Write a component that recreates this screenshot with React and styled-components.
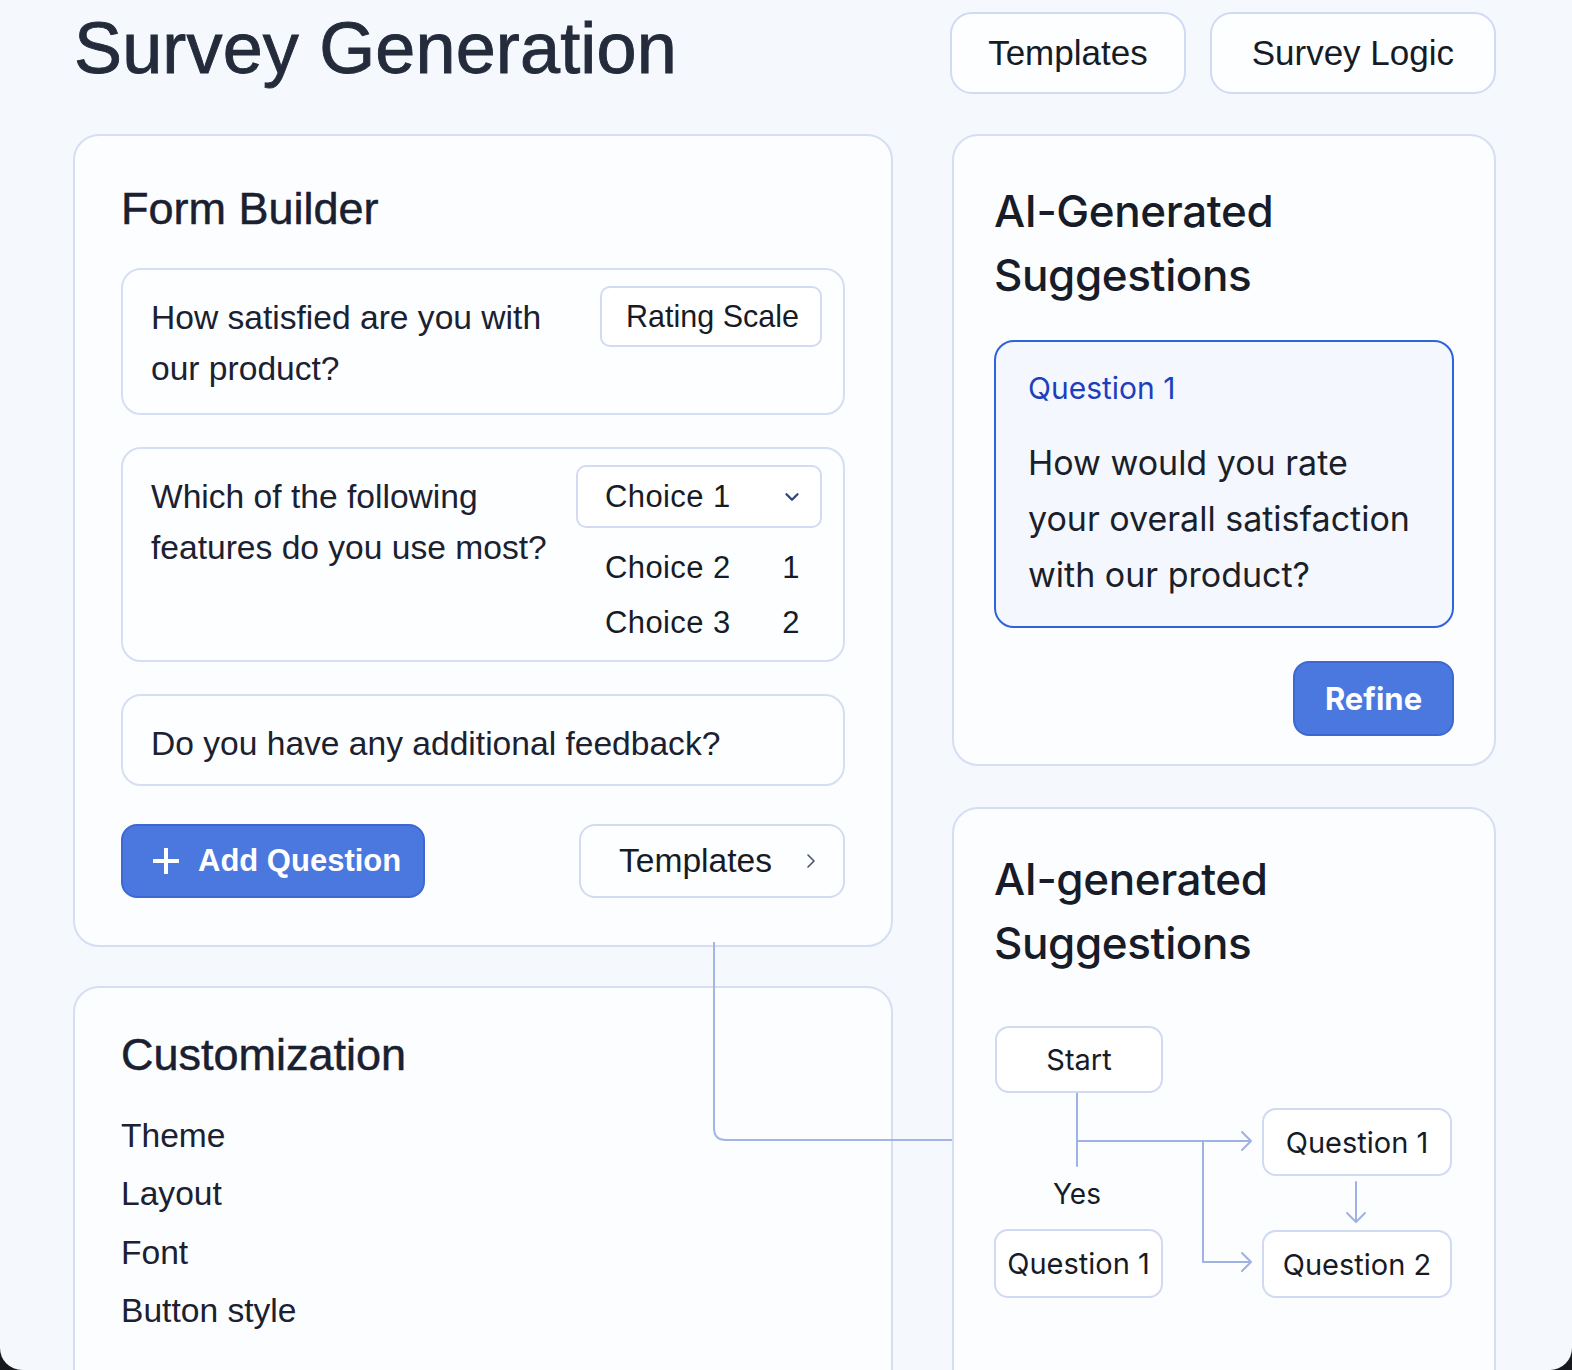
import React from "react";
import styled, { createGlobalStyle } from "styled-components";
import { ChevronDown, ChevronRight } from "lucide-react";

const GlobalStyle = createGlobalStyle`
  html, body {
    margin: 0;
    background: #17191e;
  }
  body {
    font-family: "Liberation Sans", Arial, sans-serif;
    color: #1b2130;
  }
  * {
    box-sizing: border-box;
  }
`;

const Page = styled.div`
  position: relative;
  width: 1572px;
  height: 1370px;
  overflow: hidden;
  background: #f5f8fd;
  border-radius: 0 0 22px 22px;
  padding: 0 76px 0 73px;
`;

const Header = styled.header`
  height: 134px;
  display: flex;
  align-items: flex-start;
  justify-content: space-between;
`;

const Title = styled.h1`
  margin: 5px 0 0 1px;
  font-size: 72px;
  line-height: 86px;
  font-weight: 400;
  color: #242b3b;
  -webkit-text-stroke: 0.9px #242b3b;
  letter-spacing: 0.15px;
`;

const HeaderActions = styled.div`
  display: flex;
  gap: 24px;
  margin-top: 12px;
`;

const OutlineButton = styled.button`
  height: 82px;
  padding: 0 ${(p) => p.$px}px;
  border: 2px solid #d1daf3;
  border-radius: 22px;
  background: #fdfeff;
  font-family: "Liberation Sans", Arial, sans-serif;
  font-size: 35px;
  color: #161b26;
  cursor: pointer;
`;

const Columns = styled.div`
  display: grid;
  grid-template-columns: 820px 544px;
  column-gap: 59px;
  align-items: start;
`;

const Column = styled.div`
  display: flex;
  flex-direction: column;
  gap: ${(p) => p.$gap}px;
`;

const Card = styled.section`
  background: #fcfdff;
  border: 2px solid #d6def4;
  border-radius: 26px;
  padding: ${(p) => p.$pad};
  min-height: ${(p) => p.$minH || "auto"};
`;

const CardTitle = styled.h2`
  margin: 0;
  font-size: 45px;
  line-height: 54px;
  font-weight: 400;
  color: #1a2030;
  -webkit-text-stroke: 0.5px #1a2030;
`;

const AiTitle = styled.h2`
  margin: 0;
  font-family: Inter, "Liberation Sans", sans-serif;
  font-size: 44px;
  line-height: 64px;
  font-weight: 500;
  letter-spacing: -0.4px;
  color: #171c28;
`;

const QuestionList = styled.div`
  display: flex;
  flex-direction: column;
  gap: 32px;
  margin-top: 32px;
`;

const QuestionCard = styled.div`
  display: flex;
  align-items: flex-start;
  justify-content: space-between;
  gap: 20px;
  background: #fdfeff;
  border: 2px solid #d6def4;
  border-radius: 20px;
  padding: 16px 21px ${(p) => p.$pb}px 28px;
`;

const QuestionText = styled.p`
  margin: 0;
  padding-top: 7px;
  font-size: 33.6px;
  line-height: 50.5px;
  color: #1b2130;
  flex: 1;
`;

const Chip = styled.div`
  height: 61px;
  display: flex;
  align-items: center;
  padding: 0 21px 0 24px;
  border: 2px solid #d3dbf2;
  border-radius: 10px;
  background: #ffffff;
  font-size: 30.5px;
  color: #161b26;
  white-space: nowrap;
`;

const ChoiceColumn = styled.div`
  width: 246px;
  display: flex;
  flex-direction: column;
`;

const Select = styled.div`
  height: 63px;
  display: flex;
  align-items: center;
  justify-content: space-between;
  padding: 0 17px 0 27px;
  border: 2px solid #d3dbf2;
  border-radius: 10px;
  background: #ffffff;
  font-size: 31px;
  letter-spacing: 0.4px;
  color: #161b26;
  margin-bottom: 12px;

  svg {
    color: #34477a;
  }
`;

const ChoiceRow = styled.div`
  display: flex;
  justify-content: space-between;
  padding: 0 22px 0 29px;
  font-size: 31px;
  line-height: 55px;
  letter-spacing: 0.4px;
  color: #161b26;
`;

const ActionRow = styled.div`
  display: flex;
  justify-content: space-between;
  margin-top: 38px;
`;

const PrimaryButton = styled.button`
  height: ${(p) => p.$h}px;
  width: ${(p) => p.$w}px;
  display: flex;
  align-items: center;
  justify-content: ${(p) => (p.$center ? "center" : "flex-start")};
  gap: 19px;
  padding: 0 0 0 ${(p) => (p.$center ? 0 : 30)}px;
  border: 2px solid #3d68d3;
  border-radius: 16px;
  background: #4a78df;
  color: #ffffff;
  font-family: ${(p) => p.$font};
  font-size: 31px;
  font-weight: 700;
  cursor: pointer;
`;

const TemplatesButton = styled.button`
  width: 266px;
  height: 74px;
  display: flex;
  align-items: center;
  justify-content: space-between;
  padding: 0 20px 0 38px;
  border: 2px solid #d3dbf2;
  border-radius: 16px;
  background: #fdfeff;
  font-family: "Liberation Sans", Arial, sans-serif;
  font-size: 33.6px;
  color: #161b26;
  cursor: pointer;

  svg {
    color: #4a5468;
  }
`;

const OptionList = styled.ul`
  list-style: none;
  margin: 25px 0 0;
  padding: 0;
`;

const OptionItem = styled.li`
  font-size: 33.6px;
  line-height: 58.5px;
  color: #1b2130;
`;

const SuggestionBox = styled.div`
  margin-top: 33px;
  border: 2px solid #2f63da;
  border-radius: 20px;
  background: #f4f7fd;
  padding: 26px 30px 23px 32px;
  font-family: Inter, "Liberation Sans", sans-serif;
`;

const SuggestionLabel = styled.div`
  font-size: 30px;
  line-height: 40px;
  color: #1d3fbd;
`;

const SuggestionText = styled.p`
  margin: 27px 0 0;
  font-size: 34px;
  line-height: 56px;
  color: #1a1f2b;
`;

const RefineRow = styled.div`
  display: flex;
  justify-content: flex-end;
  margin-top: 33px;
`;

const Diagram = styled.div`
  position: relative;
  height: 360px;
  font-family: Inter, "Liberation Sans", sans-serif;
`;

const Node = styled.div`
  position: absolute;
  display: flex;
  align-items: center;
  justify-content: center;
  background: #ffffff;
  border: 2px solid #d1daf3;
  border-radius: 14px;
  font-size: 29px;
  color: #161b26;
`;

const EdgeLabel = styled.span`
  position: absolute;
  transform: translate(-50%, -50%);
  font-size: 28px;
  color: #161b26;
`;

const Lines = styled.svg`
  position: absolute;
  inset: 0;
  overflow: visible;
  pointer-events: none;
`;

const Connector = styled.svg`
  position: absolute;
  left: 0;
  top: 0;
  width: 1572px;
  height: 1370px;
  pointer-events: none;
  z-index: 2;
`;

const PlusIcon = () => (
  <svg width="26" height="26" viewBox="0 0 26 26">
    <path d="M13 1v24M1 13h24" stroke="#fff" strokeWidth="4" strokeLinecap="round" />
  </svg>
);

const nodes = [
  { label: "Start", x: 1, y: 51, w: 168, h: 67 },
  { label: "Question 1", x: 268, y: 133, w: 190, h: 68 },
  { label: "Question 2", x: 268, y: 255, w: 190, h: 68 },
  { label: "Question 1", x: 0, y: 254, w: 169, h: 69 },
];

const customOptions = ["Theme", "Layout", "Font", "Button style"];

export default function App() {
  return (
    <Page>
      <GlobalStyle />
      <Header>
        <Title>Survey Generation</Title>
        <HeaderActions>
          <OutlineButton $px={36}>Templates</OutlineButton>
          <OutlineButton $px={40}>Survey Logic</OutlineButton>
        </HeaderActions>
      </Header>

      <Columns>
        <Column $gap={39}>
          <Card $pad="46px 46px 47px 46px">
            <CardTitle>Form Builder</CardTitle>
            <QuestionList>
              <QuestionCard $pb={19}>
                <QuestionText>How satisfied are you with our product?</QuestionText>
                <Chip>Rating Scale</Chip>
              </QuestionCard>
              <QuestionCard $pb={10}>
                <QuestionText>Which of the following features do you use most?</QuestionText>
                <ChoiceColumn>
                  <Select>
                    Choice 1
                    <ChevronDown size={22} strokeWidth={2.6} />
                  </Select>
                  <ChoiceRow>
                    <span>Choice 2</span>
                    <span>1</span>
                  </ChoiceRow>
                  <ChoiceRow>
                    <span>Choice 3</span>
                    <span>2</span>
                  </ChoiceRow>
                </ChoiceColumn>
              </QuestionCard>
              <QuestionCard $pb={14}>
                <QuestionText>Do you have any additional feedback?</QuestionText>
              </QuestionCard>
            </QuestionList>
            <ActionRow>
              <PrimaryButton $w={304} $h={74} $font='"Liberation Sans", Arial, sans-serif'>
                <PlusIcon />
                Add Question
              </PrimaryButton>
              <TemplatesButton>
                Templates
                <ChevronRight size={24} strokeWidth={1.6} />
              </TemplatesButton>
            </ActionRow>
          </Card>

          <Card $pad="40px 46px 40px 46px" $minH="520px">
            <CardTitle>Customization</CardTitle>
            <OptionList>
              {customOptions.map((o) => (
                <OptionItem key={o}>{o}</OptionItem>
              ))}
            </OptionList>
          </Card>
        </Column>

        <Column $gap={41}>
          <Card $pad="43px 40px 28px 40px">
            <AiTitle>
              AI-Generated
              <br />
              Suggestions
            </AiTitle>
            <SuggestionBox>
              <SuggestionLabel>Question 1</SuggestionLabel>
              <SuggestionText>
                How would you rate
                <br />
                your overall satisfaction
                <br />
                with our product?
              </SuggestionText>
            </SuggestionBox>
            <RefineRow>
              <PrimaryButton $w={161} $h={75} $center $font='Inter, "Liberation Sans", sans-serif'>
                Refine
              </PrimaryButton>
            </RefineRow>
          </Card>

          <Card $pad="38px 40px 40px 40px" $minH="620px">
            <AiTitle>
              AI-generated
              <br />
              Suggestions
            </AiTitle>
            <Diagram>
              <Lines width="460" height="360">
                <g stroke="#9fb2e3" strokeWidth="2" fill="none" strokeLinecap="round" strokeLinejoin="round">
                  <path d="M83 118V191" />
                  <path d="M83 166H257M248 157l9 9-9 9" />
                  <path d="M209 166V287H257M248 278l9 9-9 9" />
                  <path d="M362 207V247M353 238l9 9 9-9" />
                </g>
              </Lines>
              {nodes.map((n, i) => (
                <Node key={i} style={{ left: n.x, top: n.y, width: n.w, height: n.h }}>
                  {n.label}
                </Node>
              ))}
              <EdgeLabel style={{ left: 83, top: 219 }}>Yes</EdgeLabel>
            </Diagram>
          </Card>
        </Column>
      </Columns>

      <Connector viewBox="0 0 1572 1370">
        <path
          d="M714 942V1128Q714 1140 726 1140H952"
          stroke="#a4b5e4"
          strokeWidth="2"
          fill="none"
        />
      </Connector>
    </Page>
  );
}
